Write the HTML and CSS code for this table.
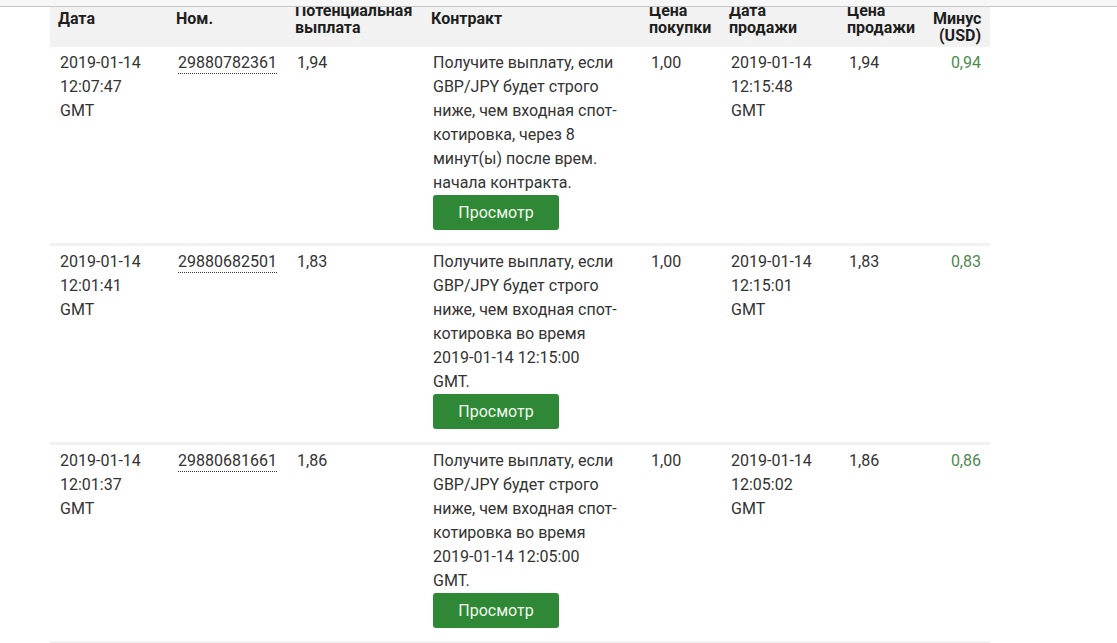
FILE: index.html
```html
<!DOCTYPE html>
<html lang="ru">
<head>
<meta charset="utf-8">
<title>Выписка</title>
<link rel="stylesheet" href="styles.css">
</head>
<body>
<div class="topbar"></div>
<main class="page">
  <table class="statement">
    <colgroup>
      <col class="c-date"><col class="c-ref"><col class="c-payout"><col class="c-contract">
      <col class="c-buy"><col class="c-selldate"><col class="c-sell"><col class="c-pl">
    </colgroup>
    <thead>
      <tr>
        <th>Дата</th>
        <th>Ном.</th>
        <th>Потенциальная выплата</th>
        <th>Контракт</th>
        <th>Цена покупки</th>
        <th>Дата продажи</th>
        <th>Цена продажи</th>
        <th class="num pl-head">Минус (USD)</th>
      </tr>
    </thead>
    <tbody>
      <tr>
        <td>2019-01-14 12:07:47 GMT</td>
        <td><span class="ref">29880782361</span></td>
        <td>1,94</td>
        <td class="contract">Получите выплату, если GBP/JPY будет строго ниже, чем входная спот-котировка, через 8 минут(ы) после врем. начала контракта.<br><button class="view">Просмотр</button></td>
        <td>1,00</td>
        <td>2019-01-14 12:15:48 GMT</td>
        <td>1,94</td>
        <td class="num profit">0,94</td>
      </tr>
      <tr>
        <td>2019-01-14 12:01:41 GMT</td>
        <td><span class="ref">29880682501</span></td>
        <td>1,83</td>
        <td class="contract">Получите выплату, если GBP/JPY будет строго ниже, чем входная спот-котировка во время <span class="stamp">2019-01-14 12:15:00</span> GMT.<br><button class="view">Просмотр</button></td>
        <td>1,00</td>
        <td>2019-01-14 12:15:01 GMT</td>
        <td>1,83</td>
        <td class="num profit">0,83</td>
      </tr>
      <tr>
        <td>2019-01-14 12:01:37 GMT</td>
        <td><span class="ref">29880681661</span></td>
        <td>1,86</td>
        <td class="contract">Получите выплату, если GBP/JPY будет строго ниже, чем входная спот-котировка во время <span class="stamp">2019-01-14 12:05:00</span> GMT.<br><button class="view">Просмотр</button></td>
        <td>1,00</td>
        <td>2019-01-14 12:05:02 GMT</td>
        <td>1,86</td>
        <td class="num profit">0,86</td>
      </tr>
    </tbody>
  </table>
</main>
</body>
</html>
```
FILE: styles.css
```css
html, body {
  margin: 0;
  padding: 0;
  background: #ffffff;
}

body {
  font-family: Roboto, "Liberation Sans", Arial, sans-serif;
  color: #333333;
  overflow: hidden;
}

.topbar {
  position: fixed;
  top: 0;
  left: 0;
  right: 0;
  height: 6px;
  background: #f7f7f7;
  border-bottom: 1px solid #c6c6c6;
  z-index: 10;
}

.page {
  padding: 0 0 0 50px;
}

.statement {
  margin-top: -11px;
  width: 940px;
  table-layout: fixed;
  border-collapse: collapse;
  border-spacing: 0;
}

.c-date { width: 118px; }
.c-ref { width: 119px; }
.c-payout { width: 136px; }
.c-contract { width: 218px; }
.c-buy { width: 80px; }
.c-selldate { width: 118px; }
.c-sell { width: 86px; }
.c-pl { width: 65px; }

.statement th {
  background: #f2f2f2;
  color: #1e1e1e;
  font-size: 16px;
  font-weight: 700;
  line-height: 17px;
  text-align: left;
  vertical-align: middle;
  padding: 4px 8px 3px 8px;
  height: 51px;
  white-space: normal;
}

.statement th.pl-head {
  vertical-align: bottom;
  padding-bottom: 3px;
}

.statement td {
  font-size: 16px;
  line-height: 24px;
  vertical-align: top;
  text-align: left;
  padding: 4px 10px 13px 10px;
  border-bottom: 3px solid #f2f2f2;
}

.statement td.contract {
  padding-right: 21px;
}

.stamp {
  white-space: nowrap;
}

.statement th.num,
.statement td.num {
  text-align: right;
  padding-right: 9px;
}

.profit {
  color: #4b8b50;
}

.ref {
  border-bottom: 1px dotted #333333;
  padding-bottom: 1px;
}

.view {
  display: inline-block;
  height: 35px;
  width: 126px;
  margin: 0;
  padding: 0;
  border: none;
  border-radius: 3px;
  background: #2e8836;
  color: #f2f8ec;
  font-family: Roboto, "Liberation Sans", Arial, sans-serif;
  font-size: 16px;
  line-height: 35px;
  vertical-align: top;
  cursor: pointer;
}
```
